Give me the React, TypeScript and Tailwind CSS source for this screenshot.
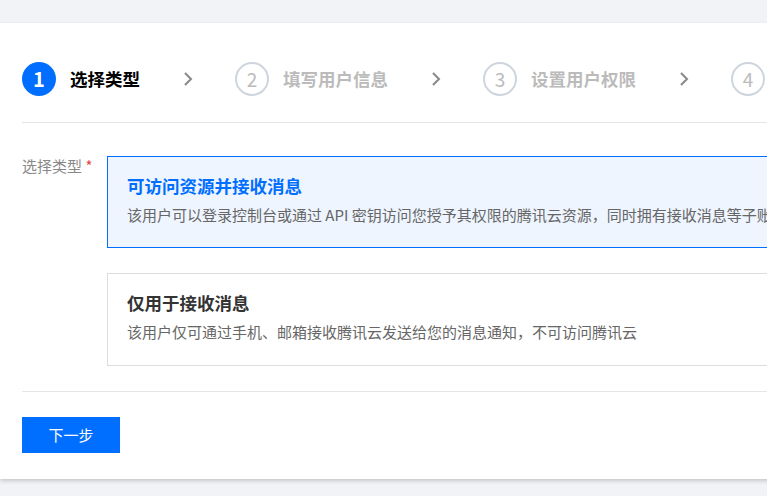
import React from 'react';

const steps = ['选择类型', '填写用户信息', '设置用户权限', '确认'];

const Chevron: React.FC = () => (
  <svg width="10" height="16" viewBox="0 0 10 16" className="ml-[43px] mr-[42px] shrink-0">
    <path d="M2 2 L8 8 L2 14" fill="none" stroke="#888" strokeWidth="2" />
  </svg>
);

const App: React.FC = () => {
  const font = { fontFamily: '"Noto Sans CJK SC", "Noto Sans", sans-serif' };

  return (
    <div className="w-[767px] h-[496px] bg-[#f2f3f7] overflow-hidden" style={font}>
      <div className="mt-[23px] w-[1200px] bg-white shadow-[0_2px_4px_rgba(0,0,0,0.18)] pl-[22px] pt-[39px] pb-[26px]">
        {/* Steps */}
        <div className="flex items-center h-[34px]">
          {steps.map((s, i) => (
            <React.Fragment key={s}>
              {i > 0 && <Chevron />}
              <div className="flex items-center shrink-0">
                {i === 0 ? (
                  <div className="w-[34px] h-[34px] rounded-full bg-[#006eff] text-white flex items-center justify-center text-[20px] font-bold">
                    1
                  </div>
                ) : (
                  <div className="w-[34px] h-[34px] rounded-full border-2 border-[#cfd5de] text-[#bbb] flex items-center justify-center text-[19px]">
                    {i + 1}
                  </div>
                )}
                <span
                  className={`ml-[14px] text-[17.5px] font-bold whitespace-nowrap ${i === 0 ? 'text-black' : 'text-[#bbb]'}`}
                >
                  {s}
                </span>
              </div>
            </React.Fragment>
          ))}
        </div>

        <div className="mt-[26px] h-px bg-[#e5e5e5]" />

        {/* Form */}
        <div className="flex mt-[33px]">
          <div className="w-[85px] shrink-0 text-[15px] text-[#888] leading-[20px]">
            选择类型 <span className="text-[#e54545]">*</span>
          </div>
          <div className="flex flex-col gap-[25px] flex-1">
            <div className="border border-[#006eff] bg-[#eef5ff] pl-[19px] pt-[17px] h-[92px]">
              <div className="text-[17.5px] font-bold text-[#006eff] leading-[24px]">可访问资源并接收消息</div>
              <div className="mt-[6px] text-[15px] text-[#666] leading-[22px] whitespace-nowrap">
                该用户可以登录控制台或通过 API 密钥访问您授予其权限的腾讯云资源，同时拥有接收消息等子账号的全部功能
              </div>
            </div>
            <div className="border border-[#ddd] bg-white pl-[19px] pt-[17px] h-[93px]">
              <div className="text-[17.5px] font-bold text-[#333] leading-[24px]">仅用于接收消息</div>
              <div className="mt-[6px] text-[15px] text-[#666] leading-[22px] whitespace-nowrap">
                该用户仅可通过手机、邮箱接收腾讯云发送给您的消息通知，不可访问腾讯云
              </div>
            </div>
          </div>
        </div>

        <div className="mt-[25px] h-px bg-[#e5e5e5]" />

        <button className="mt-[25px] w-[98px] h-[36px] bg-[#006eff] text-white text-[15px] flex items-center justify-center">
          下一步
        </button>
      </div>
    </div>
  );
};

export default App;
